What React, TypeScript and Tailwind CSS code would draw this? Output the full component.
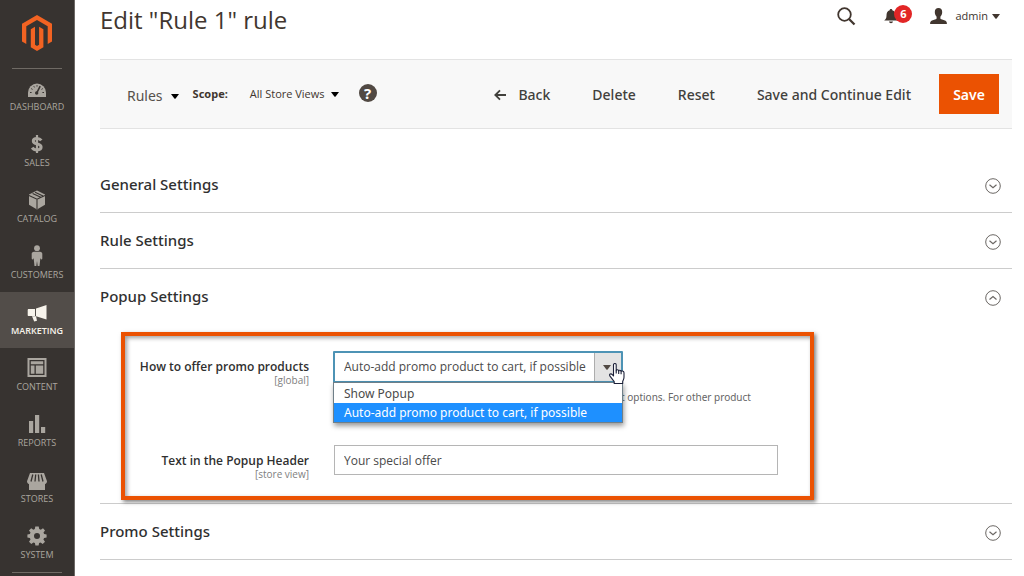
import { useState, type ReactNode } from "react";

function MagentoLogo() {
  return (
    <svg viewBox="0 0 30 36" className="h-9 w-[30px]" fill="#f26322" aria-hidden="true">
      <path d="M15 0 30 8.8V26.4L25.7 28.9V11.3L15 5.1 4.3 11.3V28.9L0 26.4V8.8Z" />
      <path d="M8.8 14.3 13 11.8V29.8L15 31 17.1 29.8V11.8L21.4 14.3V32.3L15 36 8.8 32.3Z" />
    </svg>
  );
}

const icons: Record<string, ReactNode> = {
  DASHBOARD: (
    <g transform="translate(0 2)">
      <path d="M1 17V12.5a9 9 0 0 1 18 0V17Z" fill="currentColor" />
      <g stroke="#373330" strokeWidth="1" fill="none">
        <path d="M3 12.5h1.6M15.4 12.5H17M4.2 8.6l1.3.8M6.8 6.2l.7 1.2M10 5.2v1.4M15.8 8.6l-1.3.8" />
        <path d="M13.2 6.2 10 12.5" strokeWidth="1.6" />
      </g>
      <circle cx="9.7" cy="13" r="1.7" fill="#373330" />
    </g>
  ),
  SALES: (
    <>
      <path
        d="M14.3 6.4C13.2 4.9 11.8 4.4 10 4.4 7.8 4.4 6.3 5.3 6.3 7c0 4 7.8 1.8 7.8 6 0 1.9-1.6 2.9-4.1 2.9-2.2 0-3.8-.7-4.8-2.3"
        fill="none"
        stroke="currentColor"
        strokeWidth="3"
      />
      <path d="M10 1v18" stroke="currentColor" strokeWidth="2.2" />
    </>
  ),
  CATALOG: (
    <>
      <path d="M10 .6 18 4.4V14.8L10 19.400 2 14.800V4.400Z" fill="currentColor" />
      <path d="M2 5.400 10 9.200 18 5.400M10 9.200V19M5.600 3.400 13.800 7.300M8.100 2.200 16 5.900" fill="none" stroke="#373330" strokeWidth="1.100" />
    </>
  ),
  CUSTOMERS: (
    <g transform="translate(0 -1)">
      <circle cx="10" cy="3.200" r="2.900" fill="currentColor" />
      <path
        d="M7 6.700h6c1.500 0 2.300 1 2.300 2.200v4.500c0 1.100-1.100 1.300-1.500.5l-.4-.9-.9 8H10.700l-.7-5-.7 5H7.500l-.9-8-.4.9c-.4.8-1.500.6-1.500-.5V8.900c0-1.200.8-2.200 2.300-2.200Z"
        fill="currentColor"
      />
    </g>
  ),
  MARKETING: (
    <g transform="translate(0 1)">
      <path d="M19.500 2V16.500L9 13.200V5.600ZM8 5.900V13H1.800C1 13 .7 12.600.7 12V7c0-.7.4-1.100 1.100-1.100Z" fill="currentColor" />
      <path d="M5 13.200h4l1 4.600-2.800.7Z" fill="currentColor" />
    </g>
  ),
  CONTENT: (
    <g transform="translate(0 -1)">
      <path d="M.5 1h19v19H.5ZM2.500 3v15h15V3Z" fill="currentColor" fillRule="evenodd" />
      <path d="M3.800 4.200h12.400v3H3.800ZM3.800 8.600h3.700V16.700H3.800ZM8.800 8.600H16.200V16.700H8.800Z" fill="currentColor" />
    </g>
  ),
  REPORTS: <path d="M2 7h4.200v12H2ZM8 1h4.200v18H8ZM14 13h4.200v6H14Z" fill="currentColor" />,
  STORES: (
    <g transform="translate(0 1)">
      <path
        d="M3 2h14l3 8.200c0 1.500-.8 2.500-2 2.800V19H2V13C.8 12.700 0 11.700 0 10.200Z"
        fill="currentColor"
      />
      <path d="M5.800 3.500 4 10.500M8.700 3.500 8 10.500M11.400 3.500 12 10.500M14.200 3.500 16 10.500" stroke="#373330" strokeWidth="1.300" />
    </g>
  ),
  SYSTEM: (
    <path
      fillRule="evenodd"
      fill="currentColor"
      d="M8.300.5h3.400l.5 2.600 1.600.7L16 2.300 18 4.400l-1.500 2.200.6 1.500 2.500.4v3l-2.500.5-.7 1.600L18 15.700 15.700 18l-2.200-1.500-1.400.6-.5 2.500H8.400l-.5-2.500-1.500-.6L4.300 18 2 15.700l1.500-2.200-.6-1.400-2.500-.5v-3l2.500-.5.6-1.500L2 4.400l2.200-2.100 2.100 1.500 1.500-.7ZM10 7a3 3 0 1 0 0 6 3 3 0 0 0 0-6Z"
    />
  ),
};

const menu = ["DASHBOARD", "SALES", "CATALOG", "CUSTOMERS", "MARKETING", "CONTENT", "REPORTS", "STORES", "SYSTEM"];

function Caret({ className = "" }: { className?: string }) {
  return (
    <svg viewBox="0 0 8 5" className={`h-[5px] w-2 shrink-0 ${className}`} aria-hidden="true">
      <path d="M0 0h8L4.600 4.600a.9.9 0 0 1-1.200 0Z" fill="currentColor" />
    </svg>
  );
}

function Sidebar() {
  return (
    <aside className="flex w-[75px] shrink-0 flex-col border-r border-[#6d6966] bg-[#373330] font-['Open_Sans','Noto_Sans',sans-serif]">
      <a href="#home" aria-label="Magento" className="flex h-[68px] justify-center pt-[15px]">
        <MagentoLogo />
      </a>
      <nav className="flex flex-col">
        <hr className="-mb-px mx-3 border-[#6f6a64]" />
        {menu.map((name) => {
          const active = name === "MARKETING";
          return (
            <a
              key={name}
              href={`#${name.toLowerCase()}`}
              aria-current={active ? "page" : undefined}
              className={`flex h-14 flex-col items-center gap-[3px] pt-2.5 text-[9px] leading-3 ${
                active ? "bg-[#524d49] font-semibold text-[#f7f3eb]" : "text-[#aaa69f]"
              }`}
            >
              <svg viewBox="0 0 20 20" className="h-5 w-5 overflow-visible" aria-hidden="true">
                {icons[name]}
              </svg>
              {name}
            </a>
          );
        })}
        <hr className="mx-3 border-[#6f6a64]" />
      </nav>
    </aside>
  );
}

function Header() {
  return (
    <header className="flex h-[59px] items-start justify-between font-['Open_Sans','Noto_Sans',sans-serif]">
      <h1 className="pt-1 text-2xl leading-8 text-[#41362f]">Edit "Rule 1" rule</h1>
      <div className="flex h-8 items-center pr-3 text-[#41362f]">
        <button type="button" aria-label="Search" className="mr-7">
          <svg viewBox="0 0 20 20" className="h-5 w-5" fill="none" stroke="currentColor" aria-hidden="true">
            <circle cx="8.500" cy="8.500" r="6.300" strokeWidth="1.800" />
            <path d="m13 13 5.500 5.500" strokeWidth="2.300" />
          </svg>
        </button>
        <button type="button" aria-label="6 notifications" className="mr-[18px] flex items-center">
          <svg viewBox="0 0 14 16" className="h-4 w-3.5" aria-hidden="true">
            <path
              d="M7 1c.8 0 1.300.500 1.300 1.200C10.800 2.900 11.500 5 11.500 7.500c0 2.500.7 3.500 2.300 5H.2c1.600-1.500 2.300-2.500 2.300-5 0-2.500.7-4.600 3.200-5.300C5.700 1.500 6.200 1 7 1ZM5 13.500h4c-.2 1-1 1.700-2 1.700s-1.800-.7-2-1.700Z"
              fill="currentColor"
            />
          </svg>
          <span className="-ml-1 mb-1 flex h-[18px] w-[18px] items-center justify-center rounded-full bg-[#e22626] text-[11px] font-bold leading-4 text-white">
            6
          </span>
        </button>
        <button type="button" className="flex items-center text-[11px] leading-4">
          <svg viewBox="0 0 17 16" className="mr-2 h-4 w-[17px]" aria-hidden="true">
            <path
              d="M8.500 0c2.300 0 3.700 1.600 3.700 4 0 2-.8 3.700-1.800 4.700v1.500c0 .6.3.9.9 1.100l3.700 1.300c1.300.5 1.900 1.400 1.900 3.400H.1C.1 14 .7 13.100 2 12.600l3.700-1.300c.6-.2.9-.5.9-1.100V8.700C5.600 7.700 4.800 6 4.800 4c0-2.400 1.400-4 3.700-4Z"
              fill="currentColor"
            />
          </svg>
          admin
          <Caret className="ml-1" />
        </button>
      </div>
    </header>
  );
}

function Toolbar() {
  return (
    <div className="flex h-[70px] items-center border-y border-[#e3e3e3] bg-[#f8f8f8] pl-[27px] pr-[13px]">
      <button type="button" className="flex items-center pt-1 text-sm leading-5 text-[#56514c]">
        Rules
        <Caret className="ml-2 text-black" />
      </button>
      <span className="ml-3.5 text-[11px] font-bold leading-5 text-[#41362f]">Scope:</span>
      <button type="button" className="ml-[22px] flex items-center font-['Open_Sans','Noto_Sans',sans-serif] text-[11px] leading-5 text-[#41362f]">
        All Store Views
        <Caret className="ml-1.5 text-black" />
      </button>
      <button type="button" aria-label="Help" className="mb-0.5 ml-5 flex h-[18px] w-[18px] items-center justify-center rounded-full bg-[#514943] text-[15px] font-bold leading-4 text-white">
        ?
      </button>
      <div className="ml-auto flex items-center gap-[42px] pt-0.5 text-sm font-medium leading-5 text-[#41403c]">
        <button type="button" className="flex items-center">
          <svg viewBox="0 0 12 12" className="mr-3 h-3 w-3" fill="none" stroke="currentColor" strokeWidth="1.800" aria-hidden="true">
            <path d="M12 6H1.500M6 1.300 1.300 6 6 10.700" />
          </svg>
          Back
        </button>
        <button type="button">Delete</button>
        <button type="button">Reset</button>
        <button type="button">Save and Continue Edit</button>
      </div>
      <button type="button" className="ml-7 h-10 w-[60px] bg-[#eb5202] pt-0.5 text-sm font-semibold leading-5 text-white">
        Save
      </button>
    </div>
  );
}

function Section({ title, open = false, children }: { title: string; open?: boolean; children?: ReactNode }) {
  return (
    <section className="border-b border-[#cccccc]">
      <h2>
        <button type="button" aria-expanded={open} className="flex h-[55px] w-full items-center justify-between pb-0.5 pr-[11px] text-[15px] font-medium leading-5 text-[#303030]">
          {title}
          <svg viewBox="0 0 16 16" className="mt-1 h-4 w-4" fill="none" stroke="#6b6764" aria-hidden="true">
            <circle cx="8" cy="8" r="7.300" />
            <path d={open ? "m4.500 9.500 3.500-3 3.500 3" : "m4.500 6.800 3.500 3 3.500-3"} strokeWidth="1.200" />
          </svg>
        </button>
      </h2>
      {children}
    </section>
  );
}

const options = ["Show Popup", "Auto-add promo product to cart, if possible"];

function Pointer() {
  return (
    <svg viewBox="0 0 16 22" className="absolute -right-0.5 top-3 z-20 h-[22px] w-4" aria-hidden="true">
      <path
        d="M4.500 1.800c0-1.700 2.700-1.700 2.700 0v6c0-1.400 2.500-1.300 2.500.2 0-1.200 2.400-1 2.400.5 0-1.100 2.900-.9 2.900 1.300v4.500c0 2-1 3-1.300 4.200v2H5.200v-1.800L1 13.200C-.2 11.200 1.900 10 3.300 11.600l1.200 1.400Z"
        fill="#fff"
        stroke="#1c2038"
        strokeWidth="1.100"
        strokeLinejoin="round"
      />
      <path d="M7.200 7.500V10.500M9.700 8V11M12.100 8.500V11.300" stroke="#1c2038" strokeWidth="1.100" />
    </svg>
  );
}

function FieldLabel({ htmlFor, scope, children }: { htmlFor: string; scope: string; children: ReactNode }) {
  return (
    <label htmlFor={htmlFor} className="flex flex-col pt-2 text-right text-xs font-semibold leading-[15px] text-[#303030]">
      {children}
      <span className="font-['Open_Sans','Noto_Sans',sans-serif] text-[10px] font-normal leading-3 text-[#808080]">{scope}</span>
    </label>
  );
}

function PopupForm() {
  const [choice, setChoice] = useState(options[1]);
  const [header, setHeader] = useState("Your special offer");
  return (
    <div className="mb-[3px] ml-[21px] mt-2 flex h-[168px] max-w-[693px] flex-col border-4 border-[#eb5202] pr-8 pt-[15px] font-['Open_Sans','Noto_Sans',sans-serif] shadow-[2px_2px_4px_#00000080,inset_2px_2px_4px_#00000060]">
      <div className="grid h-[94px] grid-cols-[184px_minmax(0,1fr)] gap-x-6">
        <FieldLabel htmlFor="offer" scope="[global]">
          How to offer promo products
        </FieldLabel>
        <div>
          <div className="relative max-w-[290px]">
            <select
              id="offer"
              value={choice}
              onChange={(e) => setChoice(e.target.value)}
              className="block h-8 w-full appearance-none rounded-[1px] border-2 border-[#4d93b5] bg-white pl-[9px] pr-8 text-xs leading-5 text-[#4a4a4a] outline-none"
            >
              {options.map((o) => (
                <option key={o}>{o}</option>
              ))}
            </select>
            <span className="pointer-events-none absolute bottom-0.5 right-0.5 top-0.5 flex w-[27px] items-center border-l border-[#adadad] bg-[#e3e3e3] pl-2 text-[#514943]">
              <Caret />
            </span>
            <ul role="listbox" aria-label="Offer options" className="absolute left-0 right-0 top-[31px] z-10 border border-[#6f7f88] bg-white pt-px font-['Noto_Sans','Open_Sans',sans-serif] text-xs leading-[19px] shadow-[1px_3px_5px_#00000066]">
              {options.map((o) => (
                <li
                  key={o}
                  role="option"
                  aria-selected={o === choice}
                  onClick={() => setChoice(o)}
                  className={`h-[19px] pl-2.5 ${o === choice ? "bg-[#1e90ff] text-white" : "text-[#4a4a4a]"}`}
                >
                  {o}
                </li>
              ))}
            </ul>
            <Pointer />
          </div>
          <p className="pl-[288px] pt-1.5 font-['Noto_Sans','Open_Sans',sans-serif] text-[10px] leading-4 text-[#666666]">t options. For other product</p>
        </div>
      </div>
      <div className="grid grid-cols-[184px_minmax(0,1fr)] gap-x-6">
        <FieldLabel htmlFor="header" scope="[store view]">
          Text in the Popup Header
        </FieldLabel>
        <input
          id="header"
          value={header}
          onChange={(e) => setHeader(e.target.value)}
          className="ml-px h-[30px] border border-[#b5b5b5] bg-white px-[9px] text-xs leading-5 text-[#4a4a4a]"
        />
      </div>
    </div>
  );
}

export default function App() {
  return (
    <div className="flex h-screen overflow-hidden bg-white font-['Noto_Sans','Open_Sans',sans-serif]">
      <Sidebar />
      <main className="min-w-0 flex-1 pl-[25px] pr-3">
        <Header />
        <Toolbar />
        <div className="pt-7">
          <Section title="General Settings" />
          <Section title="Rule Settings" />
          <Section title="Popup Settings" open>
            <PopupForm />
          </Section>
          <Section title="Promo Settings" />
        </div>
      </main>
    </div>
  );
}
